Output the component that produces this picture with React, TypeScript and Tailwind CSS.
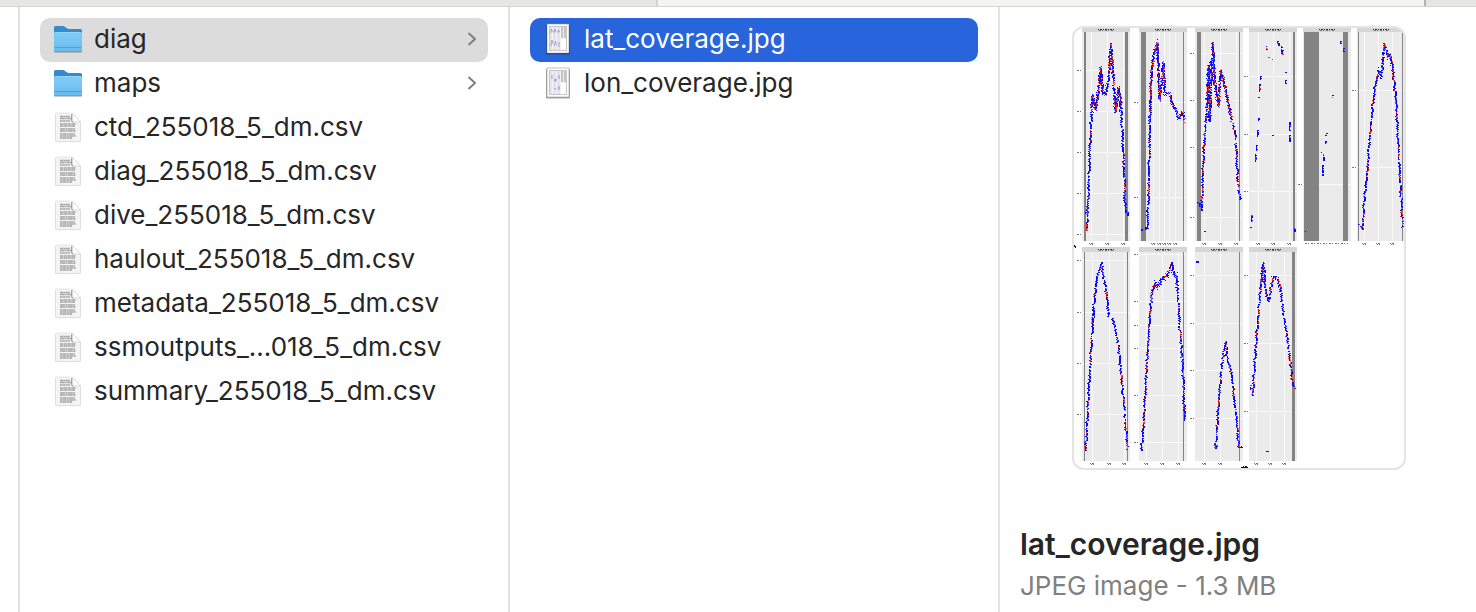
import React, { useState } from "react";

type Point = [number, number];
type Panel = {
  x: number;
  top: number;
  bands: [number, number][];
  rows: number[];
  cols: number[];
  line?: Point[];
  rough?: [number, number];
  marks?: [number, number, number][];
};

const panels: Panel[] = [
  {
    x: 10, top: 0, bands: [[12, 2], [53, 3]], rows: [44, 85, 126, 167, 208], cols: [19, 35, 51],
    line: [[14, 204], [15, 186], [16, 159], [17, 129], [18, 104], [20, 69], [23, 82], [25, 72], [28, 42], [30, 66], [33, 68], [36, 52], [38, 16], [40, 40], [43, 85], [46, 62], [48, 74], [50, 112], [51, 139], [52, 164], [53, 188]],
    rough: [30, 86], marks: [[13, 186, 3], [55, 187, 3], [56, 186, 2]],
  },
  {
    x: 67, top: 0, bands: [[69, 5], [111, 1]], rows: [76, 171], cols: [81, 87, 92, 97, 103],
    line: [[75, 202], [76, 154], [77, 112], [78, 64], [79, 44], [81, 29], [85, 17], [86, 54], [87, 73], [91, 37], [92, 66], [97, 67], [101, 80], [106, 92], [110, 86], [112, 94]],
    rough: [14, 98], marks: [[69, 203, 2], [73, 201, 3], [74, 202, 3]],
  },
  {
    x: 123, top: 0, bands: [[125, 4], [167, 1]], rows: [27, 74, 121, 191], cols: [132, 148, 164],
    line: [[129, 184], [130, 154], [131, 124], [132, 112], [135, 69], [136, 39], [137, 94], [140, 16], [142, 56], [145, 74], [146, 79], [148, 44], [151, 54], [155, 74], [159, 92], [163, 111], [164, 134], [166, 164], [168, 174]],
    rough: [36, 94], marks: [[125, 176, 2], [127, 177, 4], [132, 205, 1]],
  },
  {
    x: 177, top: 0, bands: [[221, 2]], rows: [50, 108, 165], cols: [186, 201, 217],
    marks: [[194, 20, 4], [205, 15, 3], [206, 17, 3], [209, 20, 8], [210, 24, 5], [196, 31, 1], [200, 33, 1], [213, 46, 1], [213, 54, 4], [188, 50, 4], [187, 58, 8], [186, 71, 1], [186, 92, 3], [185, 104, 7], [200, 109, 1], [217, 96, 9], [217, 109, 7], [184, 119, 6], [183, 128, 8], [179, 189, 7], [178, 201, 1], [222, 202, 4]],
  },
  {
    x: 231, top: 0, bands: [[232, 15], [271, 5]], rows: [158], cols: [],
    marks: [[268, 15, 3], [271, 22, 4], [260, 69, 3], [254, 107, 1], [253, 109, 1], [253, 115, 3], [249, 126, 2], [251, 128, 7], [250, 139, 11], [233, 205, 1]],
  },
  {
    x: 285, top: 0, bands: [[286, 1], [330, 1]], rows: [64, 141], cols: [292, 306, 320],
    line: [[287, 198], [290, 204], [291, 179], [295, 139], [298, 99], [301, 72], [303, 57], [306, 45], [309, 50], [310, 36], [312, 17], [315, 30], [317, 28], [320, 40], [323, 69], [325, 104], [327, 149], [329, 179], [330, 202]],
    rough: [25, 50],
  },
  {
    x: 10, top: 220, bands: [[12, 1], [55, 1]], rows: [234, 286, 337, 388], cols: [20, 37, 52],
    line: [[13, 424], [16, 364], [19, 314], [21, 282], [24, 251], [29, 236], [31, 249], [34, 269], [36, 287], [40, 292], [45, 314], [48, 344], [51, 374], [54, 411], [55, 424]],
    rough: [284, 294],
  },
  {
    x: 67, top: 220, bands: [[111, 1]], rows: [228, 275, 299, 322, 369, 416], cols: [74, 90, 106],
    line: [[69, 424], [72, 379], [75, 324], [77, 289], [80, 264], [83, 256], [85, 261], [90, 251], [95, 249], [99, 236], [101, 248], [104, 250], [106, 284], [109, 324], [111, 359], [112, 396]],
    rough: [246, 268],
  },
  {
    x: 123, top: 220, bands: [[167, 1]], rows: [249, 297, 344, 392], cols: [132, 148],
    line: [[143, 422], [146, 374], [149, 340], [153, 315], [155, 334], [159, 347], [161, 367], [164, 394], [166, 421], [168, 420]],
    marks: [[124, 235, 2], [125, 235, 2], [142, 419, 3], [144, 419, 3], [169, 420, 2]],
  },
  {
    x: 177, top: 220, bands: [[220, 3]], rows: [249, 317, 385], cols: [184, 198, 212],
    line: [[180, 369], [181, 354], [183, 324], [186, 284], [188, 259], [191, 236], [193, 266], [196, 275], [199, 257], [201, 249], [205, 253], [208, 262], [211, 289], [215, 314], [218, 339], [220, 359], [222, 363]],
    rough: [245, 262], marks: [[194, 425, 1], [195, 425, 1], [178, 359, 5]],
  },
];

function randomSource(seed: number) {
  let s = seed;
  return () => {
    s = (s * 1664525 + 1013904223) % 4294967296;
    return s / 4294967296;
  };
}

function scatter(panel: Panel, seed: number) {
  const rand = randomSource(seed);
  const out = { blue: "", red: "", pale: "" };
  const put = (x: number, y: number) => {
    const r = rand();
    const key = r < 0.17 ? "red" : r < 0.25 ? "pale" : "blue";
    out[key] += `M${Math.round(x)} ${Math.round(y)}h1v1h-1z`;
  };
  const line = panel.line ?? [];
  for (let i = 1; i < line.length; i++) {
    const [x0, y0] = line[i - 1];
    const [x1, y1] = line[i];
    const n = Math.max(Math.abs(x1 - x0), Math.abs(y1 - y0));
    for (let k = 0; k < n; k++) {
      const t = k / n;
      const x = x0 + (x1 - x0) * t;
      const y = y0 + (y1 - y0) * t;
      const rough = panel.rough && y >= panel.rough[0] && y <= panel.rough[1];
      if (rand() < 0.08) continue;
      put(x, y);
      if (rand() < 0.85) put(x + (rand() < 0.75 ? 1 : -1), y);
      if (rough) {
        put(x + (rand() - 0.5) * 2, y + (rand() - 0.5) * 8);
        if (rand() < 0.7) put(x + (rand() - 0.5) * 3, y + (rand() - 0.5) * 5);
      }
    }
  }
  for (const [x, y, h] of panel.marks ?? []) {
    for (let k = 0; k < h; k++) {
      if (k === 0 || rand() < 0.9) out[rand() < 0.12 ? "red" : "blue"] += `M${x} ${y + k}h${rand() < 0.5 ? 2 : 1}v1H${x}z`;
    }
  }
  return out;
}

function CoverageChart() {
  return (
    <svg viewBox="0 0 330 440" className="block h-auto w-full" shapeRendering="crispEdges" role="img" aria-label="Latitude coverage plots">
      {panels.map((p, i) => {
        const dots = scatter(p, 97 + i * 31);
        const y = p.top === 0 ? 4 : 224;
        const head = p.top === 0 ? -1 : 219;
        return (
          <g key={i}>
            <rect x={p.x - 2} y={head} width="48" height="5" fill="#d6d6d6" />
            <rect x={p.x - 2} y={y} width="48" height="209" fill="#ebebeb" />
            {p.rows.map((r, k) => (
              <g key={k}>
                <rect x={p.x - 2} y={r - 2} width="48" height="1" fill="#fafafa" />
                <path d={`M${p.x - 7} ${r - 1.5}h4`} stroke="#777" strokeDasharray="2 1 1" />
              </g>
            ))}
            {p.cols.map((c, k) => (
              <g key={k}>
                <rect x={c - 2} y={y} width="1" height="209" fill="#f8f8f8" />
                <path d={`M${c - 4} ${y + 211.5}h5M${c - 3} ${y + 212.5}h3`} stroke="#777" strokeDasharray="1 1 2 1" />
              </g>
            ))}
            {i === 4 && <path d="M231 215.5h43" stroke="#777" strokeDasharray="2 1 1 2" />}
            {p.bands.map(([x, w], k) => (
              <rect key={k} x={x - 2} y={y} width={w} height="209" fill="#838383" />
            ))}
            <path d={`M${p.x + 14} ${head + 2.5}h16`} stroke="#333" strokeDasharray="1 1 2 1" />
            <path d={`M${p.x + 15} ${head + 3.5}h14`} stroke="#777" strokeDasharray="2 1 1 2" />
            <g transform="translate(-2 -2)">
              <path d={dots.pale} fill="#8d8df5" />
              <path d={dots.blue} fill="#0a0af5" />
              <path d={dots.red} fill="#ee2c24" />
            </g>
          </g>
        );
      })}
      <path d="M0 217h1v1h1v2h-1v-1h-1zM167 439h2v-1h1v1h1v-1h2v1h1v1h-7z" fill="#111" />
    </svg>
  );
}

function FolderIcon() {
  return (
    <svg viewBox="0 0 32 32" className="size-8 shrink-0" aria-hidden="true">
      <defs>
        <linearGradient id="folderFront" x1="0" y1="0" x2="0" y2="1">
          <stop offset="0" stopColor="#81cdf8" />
          <stop offset="1" stopColor="#69bbed" />
        </linearGradient>
      </defs>
      <path d="M2 28.5q0 1.5 1.5 1.5h25q1.5 0 1.5-1.5v-2H2z" fill="#777" opacity=".4" />
      <path d="M2 4.500q0-1.500 1.500-1.500h7.500q1 0 2 .9l1.400 1.200q.8.800 2 .800H28.500q1.500 0 1.500 1.500V12H2z" fill="#3789c9" />
      <path d="M2 10.500q0-1.500 1.500-1.500h25q1.500 0 1.500 1.500v17q0 1.500-1.500 1.500h-25Q2 29 2 27.500z" fill="url(#folderFront)" />
      <path d="M2.500 24.500h27" stroke="#4ba3d9" strokeWidth="1" />
      <path d="M2.500 28.500h27" stroke="#54a9dc" strokeWidth="1" />
      <path d="M3 9.500h26" stroke="#98dafb" strokeWidth=".7" />
    </svg>
  );
}

function DocumentIcon() {
  return (
    <svg viewBox="0 -1 32 32" className="size-8 shrink-0" aria-hidden="true">
      <path d="M4.500 2h15L29 11v17.500q0 1.500-1.500 1.500h-23Q3 30 3 28.500v-25Q3 2 4.500 2z" fill="#aaa" opacity=".45" />
      <path d="M4.500 1h15L28.500 10v18q0 1.500-1.500 1.500H5q-1.500 0-1.500-1.500V2.500Q3.500 1 4.500 1z" fill="#f4f4f4" stroke="#dadada" strokeWidth=".6" />
      <g stroke="#a2a2a2" strokeWidth="1.300" fill="none">
        <path d="M8 4.500h10" strokeDasharray="3 .4 2 .4" />
        <path d="M8 6.500h11" strokeDasharray="4 .4 2 .5" />
        <path d="M8 9h10" strokeDasharray="2 .4 3 .4" />
        <path d="M8 12h16M8 14h15" strokeDasharray="3 .4 4 .4" />
        <path d="M8 17h15M8 19h16" strokeDasharray="5 .4 2 .4" />
        <path d="M8 22h15M8 24h16M8 26h12" strokeDasharray="2 .4 4 .4" />
      </g>
      <path d="M20 1 28.500 10h-7Q20 10 20 8.500z" fill="#fff" stroke="#c4c4c4" strokeWidth=".6" />
      <path d="M19.700 2.500v6q0 1.500 1.500 1.500" stroke="#777" strokeWidth=".8" fill="none" />
    </svg>
  );
}

function PictureIcon({ low = false }: { low?: boolean }) {
  return (
    <svg viewBox="0 0 32 32" className="size-8 shrink-0" aria-hidden="true">
      <rect x="4" y="2" width="24" height="29.500" rx="1" fill="#000" opacity=".35" />
      <rect x="5" y="1" width="22" height="29" fill="#fff" stroke="#888" strokeWidth=".5" />
      <rect x="7.500" y="3.500" width="17" height="24" fill="#e4e3e8" stroke="#c6c6c6" />
      <path d="M19 4h5v11h-5z" fill="#c6c6c6" />
      <path d="M19 15.500h5V27h-5z" fill="#fff" />
      <path d="M10.500 4v23M14.500 4v23M18.500 4v23M21.500 4v11" stroke="#f6f6fa" strokeWidth=".8" />
      {low ? (
        <path d="M12 13l2-1v2h-2M12.500 21l1 1h1M10 8v4M17 8v4M17 19v4" stroke="#7770d2" strokeWidth=".9" opacity=".8" fill="none" />
      ) : (
        <path d="M8.500 10l1-4 1 3M12 10l1-4 1 3M15.500 10l1-3 1 2M9 23l1-6 1 4M12.500 23l1-5 1 4M17 24v-5" stroke="#8a83d2" strokeWidth=".9" opacity=".75" fill="none" />
      )}
    </svg>
  );
}

function Chevron() {
  return (
    <svg viewBox="0 0 12 16" className="h-4 w-3 shrink-0" fill="none" stroke="#7b7b7b" strokeWidth="1.800" strokeLinecap="round" strokeLinejoin="round" aria-hidden="true">
      <path d="m3 2.500 6 5.500-6 5.500" />
    </svg>
  );
}

const entries = [
  "ctd_255018_5_dm.csv",
  "diag_255018_5_dm.csv",
  "dive_255018_5_dm.csv",
  "haulout_255018_5_dm.csv",
  "metadata_255018_5_dm.csv",
  "ssmoutputs_...018_5_dm.csv",
  "summary_255018_5_dm.csv",
];

type RowProps = { icon: React.ReactNode; name: string; state?: string; folder?: boolean; onClick?: () => void };

function Row({ icon, name, state = "", folder, onClick }: RowProps) {
  return (
    <li>
      <button type="button" onClick={onClick} className={`flex h-11 w-full items-center gap-2.5 rounded-[10px] pr-2.5 pb-0.5 pl-3 text-left ${state}`}>
        {icon}
        <span className="min-w-0 flex-1 truncate">{name}</span>
        {folder && <Chevron />}
      </button>
    </li>
  );
}

export default function App() {
  const [folder, setFolder] = useState("diag");
  const [file, setFile] = useState("lat_coverage.jpg");
  return (
    <div className="flex h-screen flex-col overflow-hidden bg-white font-['Inter',sans-serif] text-[26px] leading-8 text-[#262626]">
      <header className="flex h-[7px] shrink-0 border-b border-[#d4d4d2] bg-[#e6e6e4]">
        <div className="w-[656px]" />
        <div className="flex-1 border-x-2 border-l-[#d2d2d0] border-r-[#b3b3b1] bg-[#f4f4f2]" />
        <div className="w-[50px]" />
      </header>
      <main className="flex min-h-0 flex-1">
        <div className="w-5 shrink-0 border-r-2 border-[#e2e2e2]" />
        <ul className="w-[490px] shrink-0 border-r-2 border-[#e2e2e2] px-5 pt-[11px]">
          {["diag", "maps"].map((n) => (
            <Row key={n} icon={<FolderIcon />} name={n} folder state={folder === n ? "bg-[#dcdcdc]" : ""} onClick={() => setFolder(n)} />
          ))}
          {entries.map((n) => (
            <Row key={n} icon={<DocumentIcon />} name={n} />
          ))}
        </ul>
        <ul className="w-[490px] shrink-0 border-r-2 border-[#e2e2e2] px-5 pt-[11px]">
          {["lat_coverage.jpg", "lon_coverage.jpg"].map((n, i) => (
            <Row key={n} icon={<PictureIcon low={i === 1} />} name={n} state={file === n ? "bg-[#2864dc] text-white" : ""} onClick={() => setFile(n)} />
          ))}
        </ul>
        <section className="flex min-w-0 flex-1 flex-col pt-[19px]">
          <div className="flex justify-center pl-0.5">
            <div className="w-[334px] overflow-hidden rounded-xl border-2 border-[#e4e4e4] bg-white">
              <CoverageChart />
            </div>
          </div>
          <div className="mt-[54px] px-5">
            <h2 className="text-[30px] leading-10 font-semibold">{file}</h2>
            <p className="pt-1 leading-9 text-[#808080]">JPEG image - 1.3 MB</p>
          </div>
        </section>
      </main>
    </div>
  );
}
